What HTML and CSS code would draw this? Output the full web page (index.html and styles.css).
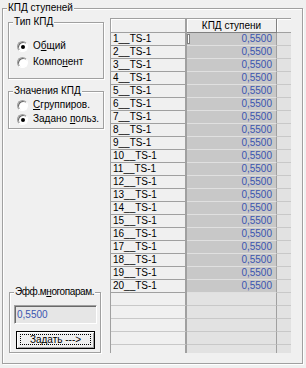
FILE: index.html
```html
<!DOCTYPE html>
<html>
<head>
<meta charset="utf-8">
<link rel="stylesheet" href="styles.css">
</head>
<body>
<div class="gb outer">
  <span class="cap">КПД ступеней</span>
  <div class="left">
    <div class="gb tip">
      <span class="cap">Тип КПД</span>
      <div class="radio"><span class="rb on"></span><span>О<u>б</u>щий</span></div>
      <div class="radio"><span class="rb"></span><span>Компо<u>н</u>ент</span></div>
    </div>
    <div class="gb zn">
      <span class="cap">Значения КПД</span>
      <div class="radio"><span class="rb"></span><span><u>С</u>группиров.</span></div>
      <div class="radio"><span class="rb on"></span><span>Задано <u>п</u>ольз.</span></div>
    </div>
    <div class="gb eff">
      <span class="cap tight">Эфф.м<u>н</u>огопарам.</span>
      <div class="edit">0,5500</div>
      <div class="btn"><span class="focus">За<u>д</u>ать ---&gt;</span></div>
    </div>
  </div>
  <div class="grid">
    <div class="row head"><div class="c1"></div><div class="c2">КПД ступени</div><div class="c3"></div></div>
    <div class="row"><div class="c1">1__TS-1</div><div class="c2"><span class="caret"></span>0,5500</div><div class="c3"></div></div>
    <div class="row"><div class="c1">2__TS-1</div><div class="c2">0,5500</div><div class="c3"></div></div>
    <div class="row"><div class="c1">3__TS-1</div><div class="c2">0,5500</div><div class="c3"></div></div>
    <div class="row"><div class="c1">4__TS-1</div><div class="c2">0,5500</div><div class="c3"></div></div>
    <div class="row"><div class="c1">5__TS-1</div><div class="c2">0,5500</div><div class="c3"></div></div>
    <div class="row"><div class="c1">6__TS-1</div><div class="c2">0,5500</div><div class="c3"></div></div>
    <div class="row"><div class="c1">7__TS-1</div><div class="c2">0,5500</div><div class="c3"></div></div>
    <div class="row"><div class="c1">8__TS-1</div><div class="c2">0,5500</div><div class="c3"></div></div>
    <div class="row"><div class="c1">9__TS-1</div><div class="c2">0,5500</div><div class="c3"></div></div>
    <div class="row"><div class="c1">10__TS-1</div><div class="c2">0,5500</div><div class="c3"></div></div>
    <div class="row"><div class="c1">11__TS-1</div><div class="c2">0,5500</div><div class="c3"></div></div>
    <div class="row"><div class="c1">12__TS-1</div><div class="c2">0,5500</div><div class="c3"></div></div>
    <div class="row"><div class="c1">13__TS-1</div><div class="c2">0,5500</div><div class="c3"></div></div>
    <div class="row"><div class="c1">14__TS-1</div><div class="c2">0,5500</div><div class="c3"></div></div>
    <div class="row"><div class="c1">15__TS-1</div><div class="c2">0,5500</div><div class="c3"></div></div>
    <div class="row"><div class="c1">16__TS-1</div><div class="c2">0,5500</div><div class="c3"></div></div>
    <div class="row"><div class="c1">17__TS-1</div><div class="c2">0,5500</div><div class="c3"></div></div>
    <div class="row"><div class="c1">18__TS-1</div><div class="c2">0,5500</div><div class="c3"></div></div>
    <div class="row"><div class="c1">19__TS-1</div><div class="c2">0,5500</div><div class="c3"></div></div>
    <div class="row"><div class="c1">20__TS-1</div><div class="c2">0,5500</div><div class="c3"></div></div>
    <div class="row empty"><div class="c1"></div><div class="c2"></div><div class="c3"></div></div>
    <div class="row empty"><div class="c1"></div><div class="c2"></div><div class="c3"></div></div>
    <div class="row empty"><div class="c1"></div><div class="c2"></div><div class="c3"></div></div>
    <div class="row empty"><div class="c1"></div><div class="c2"></div><div class="c3"></div></div>
    <div class="row empty"><div class="c1"></div><div class="c2"></div><div class="c3"></div></div>
  </div>
</div>
</body>
</html>
```
FILE: styles.css
```css
* { box-sizing: border-box; }
html, body { margin: 0; padding: 0; }
body {
  width: 306px;
  height: 368px;
  overflow: hidden;
  background: #f0f0f0;
  font-family: "Liberation Sans", Arial, sans-serif;
  font-size: 10px;
  line-height: 12px;
  color: #000;
}
u { text-decoration: underline; text-underline-offset: 1px; }

.gb {
  position: relative;
  border: 1px solid #a0a0a0;
  box-shadow: inset 1px 1px 0 #fff, 1px 1px 0 #fff;
}
.cap {
  position: absolute;
  top: -7px;
  left: 4px;
  padding: 0 1px;
  background: #f0f0f0;
  line-height: 12px;
  white-space: nowrap;
}
.cap.tight { letter-spacing: -0.4px; }

.outer {
  margin: 8px 0 0 2px;
  width: 301px;
  height: 356px;
  padding: 9px 11px 0 5px;
  display: flex;
  gap: 6px;
}

.left {
  width: 96px;
  height: 335px;
  display: flex;
  flex-direction: column;
}
.tip {
  margin-top: 4px;
  height: 57px;
  padding: 15px 0 0 8px;
}
.zn {
  margin-top: 12px;
  height: 38px;
  padding: 6px 0 0 8px;
}
.radio {
  display: flex;
  align-items: center;
  gap: 5px;
  height: 16px;
}
.zn .radio { height: 14px; }
.rb {
  width: 11px;
  height: 11px;
  border-radius: 50%;
  border: 1px solid;
  border-color: #a0a0a0 #fff #fff #a0a0a0;
  background: #fff;
  box-shadow: inset 1px 1px 0 #696969;
  display: flex;
  align-items: center;
  justify-content: center;
  flex: none;
}
.rb.on::after {
  content: "";
  width: 4px;
  height: 4px;
  border-radius: 50%;
  background: #000;
  margin: 1px 0 0 1px;
}

.eff {
  margin-top: auto;
  margin-left: 1px;
  width: 92px;
  height: 61px;
  padding: 12px 0 0 4px;
}
.edit {
  width: 83px;
  height: 19px;
  border: 1px solid;
  border-color: #a0a0a0 #fff #fff #a0a0a0;
  box-shadow: inset 1px 1px 0 #696969;
  background: #e6e6e6;
  color: #3a55b0;
  padding: 3px 0 0 2px;
}
.btn {
  margin: 7px 0 0 2px;
  width: 79px;
  height: 18px;
  border: 1px solid #000;
  box-shadow: inset 1px 1px 0 #fff, inset -1px -1px 0 #a0a0a0;
  background: #f0f0f0;
  display: flex;
  padding: 2px 3px 3px 3px;
}
.focus {
  flex: 1;
  border: 1px dotted #000;
  display: flex;
  align-items: center;
  justify-content: center;
}

.grid {
  width: 181px;
  height: 335px;
  border-left: 1px solid #a0a0a0;
  border-top: 1px solid #a0a0a0;
  overflow: hidden;
  background: #e2e2e2;
  flex: none;
}
.row {
  display: flex;
  height: 13px;
}
.row > div {
  height: 13px;
  border-bottom: 1px solid #a0a0a0;
  white-space: nowrap;
}
.c1 {
  width: 76px;
  border-right: 2px solid #a0a0a0;
  padding-left: 2px;
  background: #f0f0f0;
}
.c2 {
  position: relative;
  width: 90px;
  border-right: 1px solid #a0a0a0;
  text-align: right;
  padding-right: 4px;
  background: #c8c8c8;
  color: #3a55b0;
}
.row > .c2 { border-bottom-color: #e0e0e0; }
.c3 {
  width: 14px;
  background: #e2e2e2;
}
.row > .c3 { border-bottom-color: #c8c8c8; }

.head { height: 14px; }
.head > div {
  height: 14px;
  background: #f0f0f0;
  box-shadow: inset 1px 1px 0 #fff;
}
.head > .c2 {
  color: #000;
  text-align: center;
  padding: 1px 0 0 0;
  border-bottom-color: #808080;
  border-right-color: #808080;
}
.head > .c3 { border-bottom-color: #a0a0a0; }

.empty > .c1 { border-bottom-color: #c8c8c8; }
.empty > .c2 { background: #e2e2e2; border-bottom-color: #c8c8c8; }

.caret {
  position: absolute;
  left: 0;
  top: 1px;
  width: 3px;
  height: 10px;
  border: 1px solid #808080;
  background: #fff;
}
```
